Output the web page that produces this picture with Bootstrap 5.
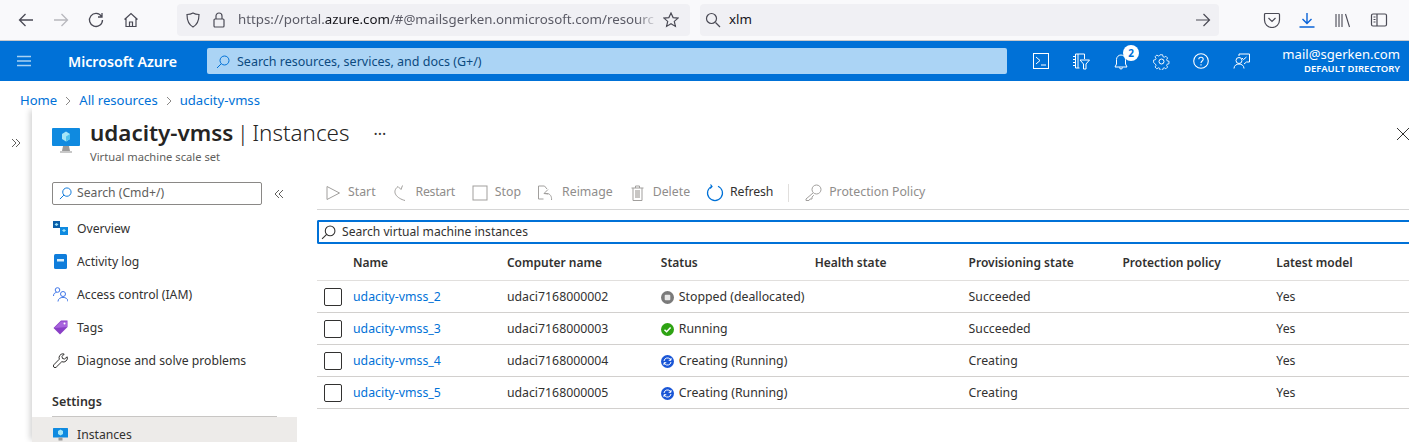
<!doctype html>
<html lang="en"><head><meta charset="utf-8"><title>udacity-vmss | Instances</title>
<link rel="stylesheet" href="https://cdn.jsdelivr.net/npm/bootstrap@5.3.0/dist/css/bootstrap.min.css">
<style>
html,body{height:442px;overflow:hidden}
body{font-family:"Noto Sans",sans-serif;font-size:12.3px;color:#323130;background:#fff}
svg{display:block;flex:none}
.ff-bar{height:41px;background:#f9f9fb;border-bottom:1px solid #c9c9cb;padding-left:8px}
.ff-btn{width:35px;display:flex;justify-content:center}
.ff-box{height:32px;background:#f0f0f4;border-radius:4px;font-size:13.3px;color:#5b5b66;white-space:nowrap;overflow:hidden}
.ff-url{width:513px;margin-left:29px;padding:0 8px}
.ff-lock{margin-left:11px}
.ff-search{width:519px;margin-left:10px;padding:0 8px 0 5px;color:#15141a}
.ff-clip{width:420px;overflow:hidden;margin-left:12px;margin-right:5px;-webkit-mask-image:linear-gradient(90deg,#000 95%,transparent);mask-image:linear-gradient(90deg,#000 95%,transparent)}
.ff-clip b{font-weight:400;color:#15141a}
.ff-tools{margin-left:44px;gap:17px}
.az-bar{height:40px;background:#0071d7;color:#fff}
.az-burger{margin-left:16px}
.az-brand{font-weight:600;font-size:14.2px;margin-left:36px;width:139px;padding-top:2px}
.az-search{width:800px;height:26px;background:#abd4f5;border-radius:2px;color:#0b4a80;font-size:12.5px;padding:2px 0 0 9px;gap:7px}
.az-icons{margin-left:22px;gap:16px}
.az-ic{width:24px;height:24px;position:relative;display:flex;align-items:center;justify-content:center}
.az-badge{position:absolute;right:-6px;top:-4px;width:16px;height:16px;border-radius:50%;background:#fff;color:#0071d7;font-size:10px;font-weight:700;line-height:16px;text-align:center}
.az-user{margin-left:auto;padding-right:9px;text-align:right;line-height:1}
.az-mail{font-size:13.1px;margin-bottom:3px}
.az-dir{font-size:9.5px;font-weight:600}
.crumbs{height:27px;padding:13px 0 0 20px;gap:8px;font-size:13.100px}
.crumbs a,.vm-link{color:#0071d7;text-decoration:none}
.page-wrap{height:334px}
.rail{width:32px;padding:30px 0 0 11px;flex:none}
.blade{flex:1;min-width:0;box-shadow:-4px 0 6px -2px rgba(0,0,0,.18);clip-path:inset(0 0 0 -10px)}
.blade-head{height:65px;padding:8px 0 0 20px}
.blade-logo{margin:11px 10px 0 0}
.blade-title{font-size:22.4px;line-height:33px;color:#252423;white-space:nowrap}
.blade-title b{font-weight:600}
.blade-title span{font-weight:300;word-spacing:-2.500px}
.blade-sub{font-size:11.2px;line-height:14px;color:#605e5c;margin-top:1px}
.dots{margin:9px 0 0 24px;font-size:16px;line-height:18px;color:#323130}
.x-close{margin:11px -1px 0 auto}
.side{width:265px;flex:none;font-size:12.2px}
.side-top{margin-top:9px}
.side-search{width:210px;height:23px;border:1px solid #8a8886;border-radius:2px;margin-left:20px;padding-left:6px;gap:5px;color:#605e5c}
.side-col{margin-left:12px;color:#605e5c}
.side-list{margin-top:7px}
.side-item{height:33px;padding-left:20px;gap:9px;color:#323130;line-height:14px}
.side-ic{width:16px;display:flex;justify-content:center}
.side-head{font-size:12.5px;font-weight:600;margin:12px 20px 0;height:28px;line-height:25px;border-bottom:1px solid #c8c6c4}
.side-on{background:#edebe9;padding-top:2px}
.main{flex:1;min-width:0;margin-left:20px}
.tools{height:34px;margin-top:3px;border-bottom:1px solid #d6d6d6;padding-left:8px;color:#8f8d8b}
.tool{gap:7px;margin-right:16px}
.tool-re{gap:10px;margin-right:17px;letter-spacing:-.3px}
.tool-on{color:#323130;gap:6px;margin-right:15px;letter-spacing:-.15px}
.tool-sep{width:1px;height:18px;background:#e1dfdd;margin-right:16px}
.grid-search{height:24px;border:2px solid #0071d7;border-right:0;border-radius:2px 0 0 2px;margin-top:10px;padding-left:2px;gap:6px;color:#323130;font-size:12.1px}
.vm-table{width:1092px;margin:0;table-layout:fixed;color:#323130;--bs-table-color:#323130}
.vm-table th,.vm-table td{padding:2px 0 0;font-size:12.3px;vertical-align:middle;border-bottom:1px solid #d2d0ce;white-space:nowrap;box-shadow:none}
.vm-table th{height:36px;font-size:12px;font-weight:600;border-bottom-color:#e1dfdd}
.vm-table td{height:32px}
.col-chk{width:36px}
.col-w{width:153.900px}
.box{width:18px;height:18px;border:1px solid #323130;border-radius:2px;margin-left:7px}
.st{gap:5px}
</style></head><body>
<div class="ff-bar d-flex align-items-center">
 <div class="ff-btn"><svg width="16" height="16" viewBox="0 0 16 16" fill="none" stroke="#4a4a55" stroke-width="1.3"><path d="M15 8H1.500M7.500 2 1.500 8l6 6"/></svg></div>
 <div class="ff-btn"><svg width="16" height="16" viewBox="0 0 16 16" fill="none" stroke="#b8b8bd" stroke-width="1.3"><path d="M1 8h13.500M8.500 2l6 6-6 6"/></svg></div>
 <div class="ff-btn"><svg width="16" height="16" viewBox="0 0 16 16" fill="none" stroke="#4a4a55" stroke-width="1.3"><path d="M13.500 4.500A6.500 6.500 0 1 0 14.500 8M14 1v4h-4"/></svg></div>
 <div class="ff-btn"><svg width="16" height="16" viewBox="0 0 16 16" fill="none" stroke="#4a4a55" stroke-width="1.2"><path d="M1.500 7.500 8 1.500l6.500 6M3 6.500V14.500h10V6.500M6.500 14.500v-4.500h3v4.500"/></svg></div>
 <div class="ff-box ff-url d-flex align-items-center">
  <svg width="16" height="16" viewBox="0 0 16 16" fill="none" stroke="#4a4a55" stroke-width="1.2"><path d="M8 1c2 1.200 4 1.500 6 1.500 0 6-1.500 10-6 12.500C3.500 12.500 2 8.500 2 2.500 4 2.500 6 2.200 8 1z"/></svg>
  <svg class="ff-lock" width="14" height="16" viewBox="0 0 14 16" fill="none" stroke="#4a4a55" stroke-width="1.2"><rect x="2" y="7" width="10" height="8" rx="1"/><path d="M4 7V4a3 3 0 0 1 6 0v3"/></svg>
  <div class="ff-clip">https://portal.<b>azure.com</b>/#@mailsgerken.onmicrosoft.com/resourc</div>
  <svg width="16" height="16" viewBox="0 0 16 16" fill="none" stroke="#4a4a55" stroke-width="1.2"><path d="m8 1 2.100 4.600 5 .5-3.800 3.300 1.100 5L8 11.800 3.600 14.400l1.100-5L.9 6.100l5-.5z"/></svg>
 </div>
 <div class="ff-box ff-search d-flex align-items-center">
  <svg width="16" height="16" viewBox="0 0 16 16" fill="none" stroke="#4a4a55" stroke-width="1.2"><circle cx="6.500" cy="6.500" r="5"/><path d="m10.500 10.500 4.500 4.500"/></svg>
  <span class="ms-2">xlm</span>
  <svg class="ms-auto" width="16" height="16" viewBox="0 0 16 16" fill="none" stroke="#4a4a55" stroke-width="1.2"><path d="M1 8h13.500M8.500 2l6 6-6 6"/></svg>
 </div>
 <div class="d-flex align-items-center ff-tools">
  <svg width="18" height="16" viewBox="0 0 18 16" fill="none" stroke="#4a4a55" stroke-width="1.2"><path d="M2.500 1.500h13a1 1 0 0 1 1 1V8a7.500 7.500 0 0 1-15 0V2.500a1 1 0 0 1 1-1zM5.500 6 9 9.500 12.500 6"/></svg>
  <svg width="18" height="16" viewBox="0 0 18 16" fill="none" stroke="#0a64d8" stroke-width="1.4"><path d="M9 1v10M4.500 7 9 11.500 13.500 7M1.500 15h15"/></svg>
  <svg width="20" height="16" viewBox="0 0 20 16" fill="none" stroke="#4a4a55" stroke-width="1.100"><path d="M3 2v13M6 2v13M9 2v13M12.500 2l4 13"/></svg>
  <svg width="18" height="16" viewBox="0 0 18 16" fill="none" stroke="#4a4a55" stroke-width="1.200"><rect x="1.500" y="2" width="15" height="12" rx="1.500"/><path d="M7 2v12M3.500 5h2M3.500 7.500h2M3.500 10h2"/></svg>
 </div>
</div>
<div class="az-bar d-flex align-items-center">
 <svg class="az-burger" width="16" height="12" viewBox="0 0 16 12" fill="none" stroke="#a9d2f3" stroke-width="1.500"><path d="M1 1.500h14M1 6h14M1 10.500h14"/></svg>
 <div class="az-brand">Microsoft Azure</div>
 <div class="az-search d-flex align-items-center"><svg width="14" height="14" viewBox="0 0 14 14" fill="none" stroke="#0071d7" stroke-width="1"><circle cx="8.500" cy="5.500" r="4.500"/><path d="M5.300 8.700 1 13"/></svg>Search resources, services, and docs (G+/)</div>
 <div class="az-icons d-flex align-items-center">
  <div class="az-ic"><svg width="16" height="16" viewBox="0 0 16 16" fill="none" stroke="#fff"><rect x=".5" y=".5" width="15" height="15"/><path d="m3 4 4 3.500L3 11M8 12h5"/></svg></div>
  <div class="az-ic"><svg width="18" height="17" viewBox="0 0 18 17" fill="none" stroke="#fff"><path d="M3.500 1h9v5M3.500 1v14h4M1 3.500h2.500M1 6.500h2.500M1 9.500h2.500M1 12.500h2.500M6 1v14M8 7h9.500l-3.500 4v5h-2.500v-5z"/></svg></div>
  <div class="az-ic"><svg width="16" height="17" viewBox="0 0 16 17" fill="none" stroke="#fff"><path d="M8 2a4.500 4.500 0 0 0-4.500 4.500V11L2 14h12l-1.500-3V6.500A4.500 4.500 0 0 0 8 2zM6.500 14.500a1.500 1.500 0 0 0 3 0"/></svg><span class="az-badge">2</span></div>
  <div class="az-ic"><svg width="17" height="17" viewBox="0 0 17 17" fill="none" stroke="#fff"><circle cx="8.500" cy="8.500" r="2.500"/><path d="M7 .8h3l.4 2.200 1.500.7 1.900-1.200 2.100 2.100-1.200 1.900.7 1.500 2.200.4v0l-.1 0v3l-2.100.4-.7 1.500 1.200 1.900-2.100 2.100-1.900-1.200-1.500.7-.4 2.200H7l-.4-2.200-1.500-.7-1.900 1.200-2.100-2.100 1.200-1.900-.7-1.500L-.6 10V7l2.200-.4.700-1.500L1.100 3.200l2.100-2.100 1.900 1.200 1.500-.7z" transform="translate(1.100 1.100) scale(.85)"/></svg></div>
  <div class="az-ic"><svg width="16" height="16" viewBox="0 0 16 16" fill="none" stroke="#fff" stroke-width="1.100"><circle cx="8" cy="8" r="7.300"/><path d="M5.800 6.200C5.800 3.500 10.200 3.500 10.200 6.200 10.200 8 8 8 8 10M8 11.300v1.200"/></svg></div>
  <div class="az-ic"><svg width="17" height="16" viewBox="0 0 17 16" fill="none" stroke="#fff"><circle cx="6" cy="7.500" r="3"/><path d="M1 15.500c0-6 10-6 10 0M6 3V1h10.500v8h-3L11 11M9 5l1.500 1.500L13.500 4"/></svg></div>
 </div>
 <div class="az-user"><div class="az-mail">mail@sgerken.com</div><div class="az-dir">DEFAULT DIRECTORY</div></div>
</div>
<div class="crumbs d-flex align-items-center"><a href="#">Home</a><svg width="6" height="10" viewBox="0 0 6 10" fill="none" stroke="#8a8886"><path d="m1 1 4 4-4 4"/></svg><a href="#">All resources</a><svg width="6" height="10" viewBox="0 0 6 10" fill="none" stroke="#8a8886"><path d="m1 1 4 4-4 4"/></svg><a href="#">udacity-vmss</a></div>
<div class="page-wrap d-flex">
 <div class="rail"><svg width="10" height="10" viewBox="0 0 10 10" fill="none" stroke="#605e5c"><path d="m1 1 4 4-4 4M5 1l4 4-4 4"/></svg></div>
 <div class="blade">
  <div class="blade-head d-flex">
   <svg class="blade-logo" width="28" height="28" viewBox="0 0 28 28"><rect y="1" width="28" height="18" rx="1" fill="#0f8ae0"/><path d="M14 4.500 18 7v5l-4 2.500L10 12V7z" fill="#a5e6f7"/><path d="M14 9.500 18 7v5l-4 2.500z" fill="#4fc3ee"/><path d="M11 19h6l1 5H10z" fill="#9a9a9a"/><rect x="8" y="24" width="12" height="2" fill="#c8c8c8"/></svg>
   <div><div class="blade-title"><b>udacity-vmss</b><span> | Instances</span></div><div class="blade-sub">Virtual machine scale set</div></div>
   <div class="dots">···</div>
   <svg class="x-close" width="14" height="14" viewBox="0 0 14 14" fill="none" stroke="#323130"><path d="m1 1 12 12M13 1 1 13"/></svg>
  </div>
  <div class="d-flex">
   <div class="side">
    <div class="side-top d-flex align-items-center">
     <div class="side-search d-flex align-items-center"><svg width="13" height="13" viewBox="0 0 14 14" fill="none" stroke="#0071d7"><circle cx="8.500" cy="5.500" r="4.500"/><path d="M5.300 8.700 1 13"/></svg>Search (Cmd+/)</div>
     <svg class="side-col" width="10" height="10" viewBox="0 0 10 10" fill="none" stroke="#605e5c"><path d="M5 1 1 5l4 4M9 1 5 5l4 4"/></svg>
    </div>
    <div class="side-list">
     <div class="side-item d-flex align-items-center"><span class="side-ic"><svg width="15" height="15" viewBox="0 0 15 15"><rect x="0" y="0" width="7" height="7" fill="#0b5ea8"/><rect x="7" y="6" width="8" height="8" fill="#0f8ae0"/><path d="M3.500 2 5.500 3.500 3.500 5 1.500 3.500zM11 8l2 1.500-2 1.500-2-1.500z" fill="#9fe3f7"/></svg></span>Overview</div>
     <div class="side-item d-flex align-items-center"><span class="side-ic"><svg width="13" height="15" viewBox="0 0 13 15"><rect width="13" height="15" rx="1.500" fill="#0f7ddb"/><rect x="3" y="5" width="7" height="2.500" fill="#d8eefb"/></svg></span>Activity log</div>
     <div class="side-item d-flex align-items-center"><span class="side-ic"><svg width="15" height="15" viewBox="0 0 15 15" fill="none" stroke="#3f76e8"><circle cx="4.500" cy="3" r="2.300"/><circle cx="10" cy="7" r="2.500"/><path d="M.5 9c0-2.500 1.500-3.500 3-3.500M5 14.500c0-5.500 10-5.500 10 0"/></svg></span>Access control (IAM)</div>
     <div class="side-item d-flex align-items-center"><span class="side-ic"><svg width="15" height="15" viewBox="0 0 15 15"><path d="M8 .5h6.500V7L7 14.500.5 8z" fill="#8a3fc6"/><path d="M1.500 8 8 1.500l6 0V7z" fill="#a864dd"/><circle cx="11.500" cy="3.500" r="1" fill="#fff"/></svg></span>Tags</div>
     <div class="side-item d-flex align-items-center"><span class="side-ic"><svg width="15" height="15" viewBox="0 0 15 15" fill="none" stroke="#323130"><path d="M10 .8a4 4 0 0 0-3.700 5.400L.8 11.800a1.700 1.700 0 0 0 2.400 2.400l5.600-5.500A4 4 0 0 0 14.200 3.800L11.500 6 9.500 5.500 9 3.500l2.200-2.500A4 4 0 0 0 10 .8z"/></svg></span>Diagnose and solve problems</div>
     <div class="side-head">Settings</div>
     <div class="side-item side-on d-flex align-items-center"><span class="side-ic"><svg width="15" height="15" viewBox="0 0 15 15"><rect y="1" width="15" height="9.500" rx=".5" fill="#0f8ae0"/><path d="M7.500 2.500 10 4v3L7.500 8.500 5 7V4z" fill="#a5e6f7"/><rect x="5.500" y="10.500" width="4" height="3" fill="#9a9a9a"/></svg></span>Instances</div>
    </div>
   </div>
   <div class="main">
    <div class="tools d-flex align-items-center">
     <div class="tool d-flex align-items-center"><svg width="16" height="16" viewBox="0 0 16 16" fill="none" stroke="#a19f9d"><path d="M2 1.500v13L14.500 8z"/></svg>Start</div>
     <div class="tool tool-re d-flex align-items-center"><svg width="14" height="16" viewBox="0 0 14 16" fill="none" stroke="#a19f9d"><path d="M13 15.500C5 13.500 -1 7 6 1.500l3 3 1.500-4"/></svg>Restart</div>
     <div class="tool d-flex align-items-center"><svg width="16" height="16" viewBox="0 0 16 16" fill="none" stroke="#a19f9d"><rect x="1" y="1" width="14" height="14"/></svg>Stop</div>
     <div class="tool d-flex align-items-center"><svg width="18" height="16" viewBox="0 0 18 16" fill="none" stroke="#a19f9d"><path d="M1.500 14V1h6l2.500 3M1.500 14h5M11 4.500 7 8.500l4 .5M7 8.500h3c3 0 5 3 4.500 6.500"/></svg>Reimage</div>
     <div class="tool d-flex align-items-center"><svg width="17" height="16" viewBox="-1.500 0 17 16" fill="none" stroke="#a19f9d"><path d="M1 3h12M5 3V1h4v2M2.500 3v12.500h9V3"/><rect x="4.500" y="5" width="5" height="8" fill="#c8c6c4" stroke="none"/></svg>Delete</div>
     <div class="tool tool-on d-flex align-items-center"><svg width="18" height="18" viewBox="0 0 18 18" fill="none" stroke="#0071d7" stroke-width="1.200"><path d="M6 2.200a7.500 7.500 0 1 0 6 0M4.500 .5 6 2.500 4.200 4.500"/></svg>Refresh</div>
     <div class="tool-sep"></div>
     <div class="tool d-flex align-items-center"><svg width="17" height="17" viewBox="0 0 17 17" fill="none" stroke="#a19f9d"><circle cx="11.500" cy="5.500" r="4.500"/><path d="M8 9 1 15v1.500h3l1-1.500h2v-2l1.800-1.800"/></svg>Protection Policy</div>
    </div>
    <div class="grid-search d-flex align-items-center"><svg width="15" height="15" viewBox="0 0 14 14" fill="none" stroke="#323130"><circle cx="8.500" cy="5.500" r="4.500"/><path d="M5.300 8.700 1 13"/></svg>Search virtual machine instances</div>
    <table class="table vm-table">
     <colgroup><col class="col-chk"><col class="col-w"><col class="col-w"><col class="col-w"><col class="col-w"><col class="col-w"><col class="col-w"><col></colgroup>
     <thead><tr><th></th><th>Name</th><th>Computer name</th><th>Status</th><th>Health state</th><th>Provisioning state</th><th>Protection policy</th><th>Latest model</th></tr></thead>
     <tbody>
      <tr><td><div class="box"></div></td><td><a class="vm-link" href="#">udacity-vmss_2</a></td><td>udaci7168000002</td><td><div class="st d-flex align-items-center"><svg width="13" height="13" viewBox="0 0 13 13"><circle cx="6.500" cy="6.500" r="6.500" fill="#7a7a7a"/><rect x="3.700" y="3.700" width="5.600" height="5.600" rx="1" fill="#e8e8e8"/></svg>Stopped (deallocated)</div></td><td></td><td>Succeeded</td><td></td><td>Yes</td></tr>
      <tr><td><div class="box"></div></td><td><a class="vm-link" href="#">udacity-vmss_3</a></td><td>udaci7168000003</td><td><div class="st d-flex align-items-center"><svg width="13" height="13" viewBox="0 0 13 13"><circle cx="6.500" cy="6.500" r="6.500" fill="#2ea313"/><path d="m3.500 6.800 2.100 2 4-4.300" fill="none" stroke="#fff" stroke-width="1.500"/></svg>Running</div></td><td></td><td>Succeeded</td><td></td><td>Yes</td></tr>
      <tr><td><div class="box"></div></td><td><a class="vm-link" href="#">udacity-vmss_4</a></td><td>udaci7168000004</td><td><div class="st d-flex align-items-center"><svg width="13" height="13" viewBox="0 0 13 13"><circle cx="6.500" cy="6.500" r="6.500" fill="#1a56d6"/><path d="M3 6a3.500 3.500 0 0 1 6-2l1 1M10 7a3.500 3.500 0 0 1-6 2L3 8M10 3v2.300H7.700M3 10V7.700h2.300" fill="none" stroke="#fff"/></svg>Creating (Running)</div></td><td></td><td>Creating</td><td></td><td>Yes</td></tr>
      <tr><td><div class="box"></div></td><td><a class="vm-link" href="#">udacity-vmss_5</a></td><td>udaci7168000005</td><td><div class="st d-flex align-items-center"><svg width="13" height="13" viewBox="0 0 13 13"><circle cx="6.500" cy="6.500" r="6.500" fill="#1a56d6"/><path d="M3 6a3.500 3.500 0 0 1 6-2l1 1M10 7a3.500 3.500 0 0 1-6 2L3 8M10 3v2.300H7.700M3 10V7.700h2.300" fill="none" stroke="#fff"/></svg>Creating (Running)</div></td><td></td><td>Creating</td><td></td><td>Yes</td></tr>
     </tbody>
    </table>
   </div>
  </div>
 </div>
</div>
<script src="https://cdn.jsdelivr.net/npm/bootstrap@5.3.0/dist/js/bootstrap.bundle.min.js"></script>
</body></html>
